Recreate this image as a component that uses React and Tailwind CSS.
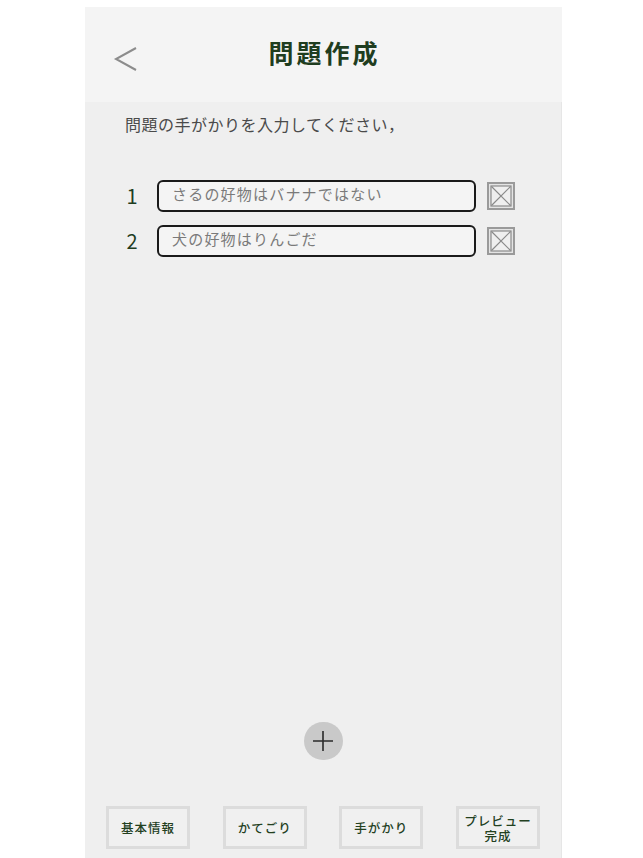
import React from 'react'

const FONT = { fontFamily: '"Noto Sans CJK JP", "Noto Sans", sans-serif' }

const CLUES = ['さるの好物はバナナではない', '犬の好物はりんごだ']
const TABS = [['基本情報'], ['かてごり'], ['手がかり'], ['プレビュー', '完成']]

function DeleteBox() {
  return (
    <svg width="28" height="28" viewBox="0 0 28 28" className="shrink-0">
      <rect x="1" y="1" width="26" height="26" fill="#e4e4e4" stroke="#9a9a9a" strokeWidth="2" />
      <rect x="4" y="4" width="20" height="20" fill="#efefef" stroke="#8a8a8a" strokeWidth="1.2" />
      <path d="M4.5 4.5 L23.5 23.5 M23.5 4.5 L4.5 23.5" stroke="#8a8a8a" strokeWidth="1.2" />
    </svg>
  )
}

export default function App() {
  return (
    <div className="w-full h-[858px] bg-white pl-[85px] pt-[7px]" style={FONT}>
      <div className="w-[477px] h-[851px] flex flex-col">

        {/* Header */}
        <div className="relative h-[95px] bg-[#f4f4f4] flex items-center justify-center shrink-0">
          <svg className="absolute left-[28px] top-[38px]" width="26" height="28" viewBox="0 0 26 28">
            <path d="M23 3 L3 14 L23 25" fill="none" stroke="#8c8c8c" strokeWidth="2" />
          </svg>
          <h1 className="text-[25px] font-semibold text-[#1f3d1f] tracking-[3px] -mt-[4px] pl-[2px]">問題作成</h1>
        </div>

        {/* Body */}
        <div className="flex-1 bg-[#efefef] border-r border-[#e6e6e6] flex flex-col">
          <p className="pl-[40px] pt-[10px] text-[16px] text-[#4a4a4a] tracking-[0.5px]">
            問題の手がかりを入力してください，
          </p>

          <div className="mt-[44px] flex flex-col gap-[13px]">
            {CLUES.map((c, i) => (
              <div key={i} className="flex items-center pl-[39px]">
                <span className="w-[16px] text-center text-[20px] text-[#1f3d1f]">{i + 1}</span>
                <div className="ml-[17px] w-[319px] h-[32px] rounded-[6px] border-2 border-[#1a1a1a] bg-[#f4f4f4] flex items-center pl-[13px]">
                  <span className="text-[15px] text-[#7a7a7a] tracking-[1.2px] leading-none -mt-[5px]">{c}</span>
                </div>
                <div className="ml-[11px]">
                  <DeleteBox />
                </div>
              </div>
            ))}
          </div>

          <div className="flex-1" />

          <div className="flex justify-center">
            <div className="w-[39px] h-[38px] rounded-full bg-[#c9c9c9] flex items-center justify-center">
              <svg width="22" height="22" viewBox="0 0 22 22">
                <path d="M11 1 V21 M1 11 H21" stroke="#2a2a2a" strokeWidth="1.6" />
              </svg>
            </div>
          </div>

          <div className="mt-[46px] mb-[9px] flex justify-between px-[21px]">
            {TABS.map((t, i) => (
              <button key={i} className="w-[84px] h-[43px] border-[3px] border-[#dcdcdc] bg-[#f0f0f0] flex flex-col items-center justify-center text-[12.5px] leading-[15px] font-medium text-[#23401f] tracking-[1px]">
                {t.map((line) => <span key={line} className="leading-[15px]">{line}</span>)}
              </button>
            ))}
          </div>
        </div>
      </div>
    </div>
  )
}
